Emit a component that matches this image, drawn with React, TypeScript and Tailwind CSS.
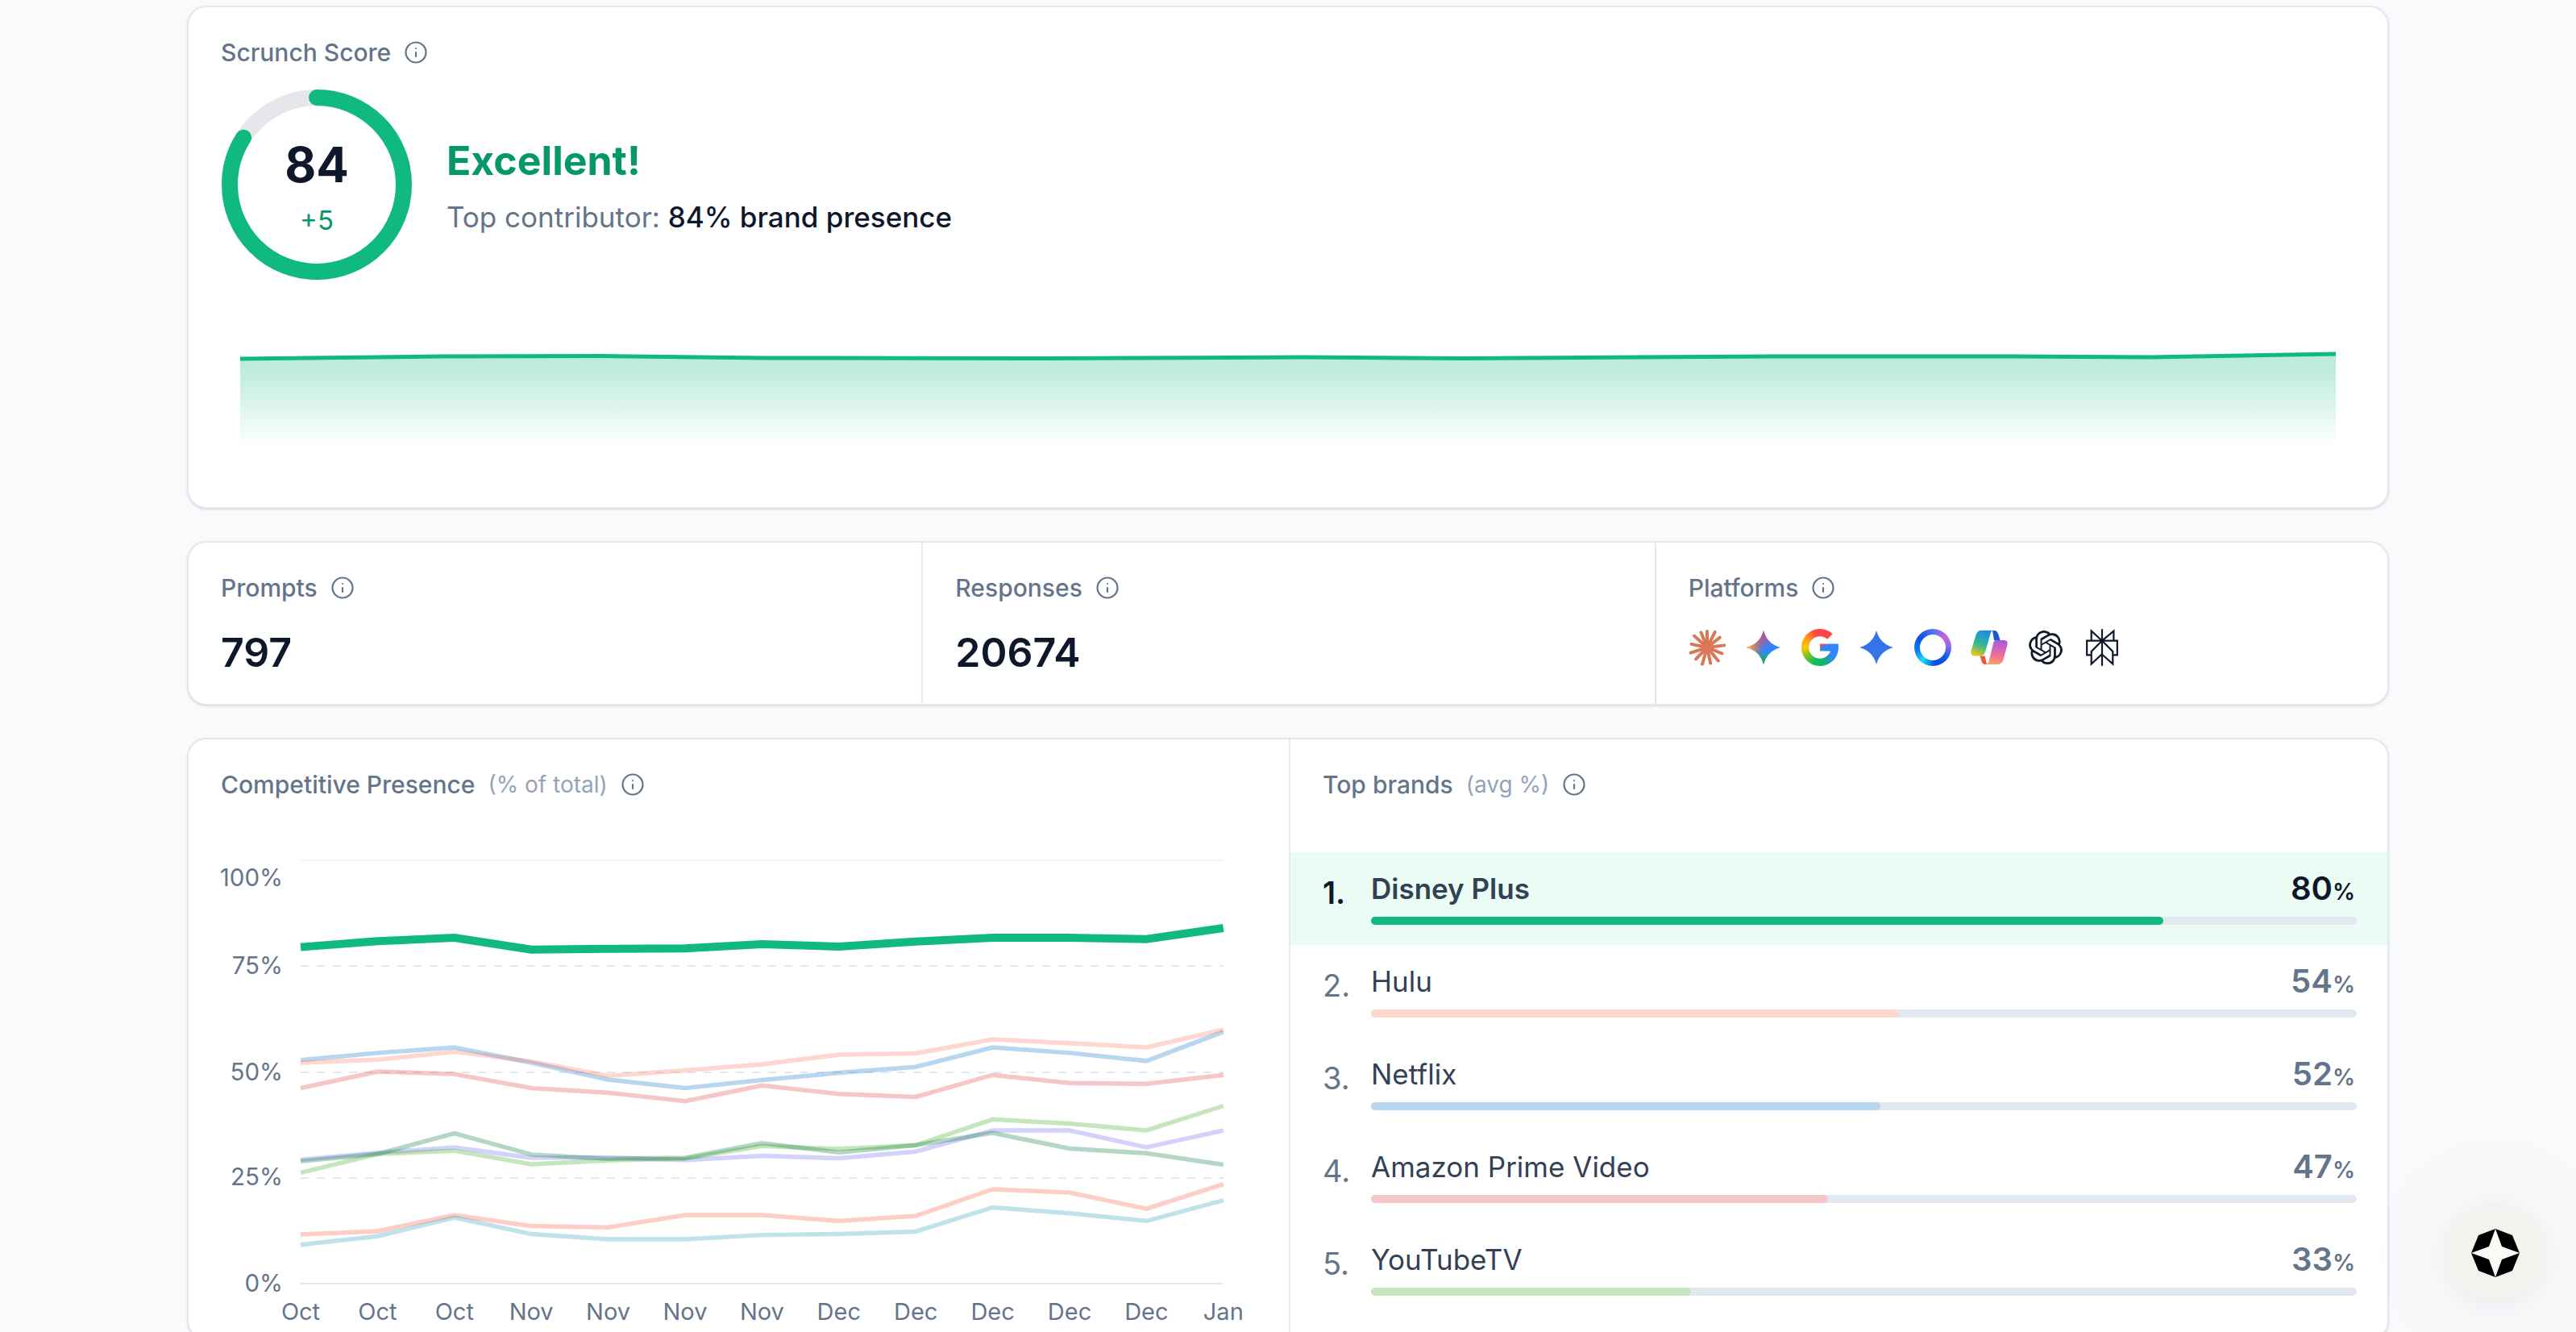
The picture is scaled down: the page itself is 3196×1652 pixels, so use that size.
import { Info } from "lucide-react";
import { SiOpenai, SiPerplexity } from "react-icons/si";

const months = ["Oct", "Oct", "Oct", "Nov", "Nov", "Nov", "Nov", "Dec", "Dec", "Dec", "Dec", "Dec", "Jan"];

const series = [
    { color: "rgb(248,88,65)", values: [11.6, 12.4, 16.2, 13.6, 13.3, 16.2, 16.2, 14.8, 16, 22.3, 21.5, 17.7, 23.5] },
    { color: "rgb(45,158,185)", values: [9.2, 11.2, 15.6, 11.7, 10.5, 10.5, 11.5, 11.7, 12.3, 18, 16.6, 14.8, 19.7] },
    { color: "rgb(105,105,238)", values: [29.3, 30.9, 32.2, 29.7, 29.8, 29.2, 30.2, 29.6, 31.2, 36.2, 36.2, 32.2, 36.2] },
    { color: "rgb(62,172,35)", values: [26.2, 30.6, 31.4, 28.2, 29.1, 29.5, 32.5, 31.8, 32.7, 38.8, 37.8, 36.2, 42] },
    { color: "rgb(8,118,55)", values: [28.9, 30.6, 35.5, 30.5, 29.5, 29.7, 33.2, 31, 32.7, 35.6, 31.9, 30.8, 28.1] },
    { color: "rgb(225,65,72)", values: [46.2, 50.1, 49.5, 46.2, 45.1, 43.1, 46.8, 44.8, 44.1, 49.3, 47.4, 47.2, 49.3] },
    { color: "rgb(15,118,205)", values: [52.8, 54.5, 55.8, 52.2, 48.2, 46.2, 48.1, 49.8, 51.2, 55.8, 54.5, 52.6, 59.5] },
    { color: "rgb(252,122,95)", values: [52.2, 52.9, 54.8, 52.5, 49.1, 50.4, 51.8, 54.1, 54.4, 57.7, 56.8, 55.8, 60] },
];

const mainSeries = [79.5, 80.9, 81.7, 78.9, 79.1, 79.2, 80.2, 79.6, 80.8, 81.7, 81.7, 81.4, 84];

const brands = [
    { name: "Disney Plus", pct: 80, width: 80.4, bar: "bg-[#10b981]" },
    { name: "Hulu", pct: 54, width: 53.5, bar: "bg-[#ffd6cd]" },
    { name: "Netflix", pct: 52, width: 51.7, bar: "bg-[#b7d6f0]" },
    { name: "Amazon Prime Video", pct: 47, width: 46.4, bar: "bg-[#f6c6c8]" },
    { name: "YouTubeTV", pct: 33, width: 32.5, bar: "bg-[#c5e6bd]" },
];

const sparkPoints: [number, number][] = [
    [0, 25], [250, 22], [450, 21.5], [650, 24], [1000, 24.5], [1320, 23], [1520, 24.5], [1900, 22], [2200, 22], [2370, 23], [2600, 19],
];

const STAR_PATH = "M23 2Q27.5 18.5 44 23Q27.5 27.5 23 44Q18.5 27.5 2 23Q18.5 18.5 23 2Z";
const G_PATH =
    "M43.611,20.083H42V20H24v8h11.303c-1.649,4.657-6.08,8-11.303,8c-6.627,0-12-5.373-12-12c0-6.627,5.373-12,12-12c3.059,0,5.842,1.154,7.961,3.039l5.657-5.657C34.046,6.053,29.268,4,24,4C12.955,4,4,12.955,4,24c0,11.045,8.955,20,20,20c11.045,0,20-8.955,20-20C44,22.659,43.862,21.35,43.611,20.083z";

const plotX = (i: number) => 99 + i * 95.4;
const plotY = (v: number) => 552 - v * 5.25;
const toPoints = (values: number[]) => values.map((v, i) => `${plotX(i)},${plotY(v)}`).join(" ");

function Label({ text, note }: { text: string; note?: string }) {
    return (
        <div className="flex h-10 items-center text-[30px] font-medium text-[#64748b]">
            <span>{text}</span>
            {note && <span className="ml-4 text-[28px] font-normal text-[#94a3b8]">{note}</span>}
            <Info className="ml-4" size={30} strokeWidth={1.75} />
        </div>
    );
}

function ScoreRing() {
    const r = 108;
    const length = 2 * Math.PI * r;
    return (
        <div className="relative h-[240px] w-[240px] shrink-0">
            <svg width="240" height="240" viewBox="0 0 240 240" className="absolute inset-0">
                <circle cx="119" cy="120" r={r} fill="none" stroke="#e5e7eb" strokeWidth="20" />
                <circle
                    cx="119"
                    cy="120"
                    r={r}
                    fill="none"
                    stroke="#10b981"
                    strokeWidth="20"
                    strokeLinecap="round"
                    strokeDasharray={`${length * 0.84} ${length}`}
                    transform="rotate(-90 119 120)"
                />
            </svg>
            <div className="absolute inset-0 flex flex-col items-center pr-[2px] pt-[61px]">
                <span className="text-[60px] leading-[68px] font-bold text-[#0f172a]">84</span>
                <span className="mt-[15px] text-[33px] leading-[40px] text-[#059669]">+5</span>
            </div>
        </div>
    );
}

function Sparkline() {
    const line = sparkPoints.map(([x, y]) => `${x},${y}`).join(" ");
    return (
        <svg width="2600" height="134" viewBox="0 0 2600 134" className="block">
            <defs>
                <linearGradient id="sparkFill" x1="0" y1="0" x2="0" y2="1">
                    <stop offset="0.15" stopColor="#10b981" stopOpacity="0.28" />
                    <stop offset="1" stopColor="#10b981" stopOpacity="0" />
                </linearGradient>
            </defs>
            <polygon points={`${line} 2600,134 0,134`} fill="url(#sparkFill)" />
            <polyline points={line} fill="none" stroke="#10b981" strokeWidth="5" />
        </svg>
    );
}

function ClaudeLogo() {
    const rays = [0, 27, 52, 83, 112, 140, 168, 196, 224, 252, 282, 312, 338];
    return (
        <svg width="46" height="46" viewBox="0 0 46 46">
            <circle cx="23" cy="23" r="7.500" fill="#d97757" />
            {rays.map((a, i) => (
                <line
                    key={a}
                    x1="23"
                    y1="23"
                    x2="23"
                    y2={i % 2 ? 1.500 : 3}
                    stroke="#d97757"
                    strokeWidth="4"
                    strokeLinecap="round"
                    transform={`rotate(${a} 23 23)`}
                />
            ))}
        </svg>
    );
}

function GeminiLogo() {
    return (
        <svg width="46" height="46" viewBox="0 0 46 46">
            <defs>
                <linearGradient id="gemLeft" x1="0" y1="0" x2="1" y2="0">
                    <stop offset="0.05" stopColor="#fbc012" />
                    <stop offset="0.5" stopColor="#c9736a" stopOpacity="0" />
                </linearGradient>
                <linearGradient id="gemTop" x1="0.3" y1="0" x2="0.6" y2="0.55">
                    <stop offset="0.1" stopColor="#e8475a" />
                    <stop offset="1" stopColor="#e8475a" stopOpacity="0" />
                </linearGradient>
                <linearGradient id="gemBottom" x1="0.5" y1="0.6" x2="0.5" y2="1">
                    <stop offset="0" stopColor="#1fa855" stopOpacity="0" />
                    <stop offset="0.8" stopColor="#1fa855" />
                </linearGradient>
            </defs>
            <path d={STAR_PATH} fill="#3186ff" />
            <path d={STAR_PATH} fill="url(#gemTop)" />
            <path d={STAR_PATH} fill="url(#gemLeft)" />
            <path d={STAR_PATH} fill="url(#gemBottom)" />
        </svg>
    );
}

function GoogleLogo() {
    return (
        <svg width="46" height="46" viewBox="4 4 40 40">
            <defs>
                <mask id="gMask">
                    <path d={G_PATH} fill="#fff" />
                </mask>
            </defs>
            <foreignObject x="4" y="4" width="40" height="40" mask="url(#gMask)">
                <div className="h-full w-full bg-[conic-gradient(#ff4545_0deg,#ff4545_48deg,#3186ff_72deg,#3186ff_125deg,#14b56a_165deg,#0ebc5f_200deg,#86c41e_240deg,#ffc800_270deg,#ff9a1f_305deg,#ff4545_345deg)]" />
            </foreignObject>
        </svg>
    );
}

function DeepStarLogo() {
    return (
        <svg width="46" height="46" viewBox="0 0 46 46">
            <path d={STAR_PATH} fill="#3574e8" />
        </svg>
    );
}

function MetaLogo() {
    return (
        <div className="flex h-[46px] w-[46px] items-center justify-center rounded-full bg-[conic-gradient(#4a74f0_0deg,#c95fe0_45deg,#8c6ae8_85deg,#1060e8_125deg,#0a46e0_170deg,#10e0f0_218deg,#1080f0_255deg,#1050e0_305deg,#4a74f0_360deg)]">
            <div className="h-[32px] w-[32px] rounded-full bg-white" />
        </div>
    );
}

function CopilotLogo() {
    return (
        <svg width="46" height="46" viewBox="0 0 46 46">
            <defs>
                <linearGradient id="copA" x1="0.6" y1="0" x2="0.25" y2="1">
                    <stop offset="0" stopColor="#1a8de8" />
                    <stop offset="0.55" stopColor="#35b98c" />
                    <stop offset="1" stopColor="#f0c619" />
                </linearGradient>
                <linearGradient id="copB" x1="0.6" y1="0" x2="0.5" y2="1">
                    <stop offset="0" stopColor="#a45be0" />
                    <stop offset="0.6" stopColor="#ec6aa0" />
                    <stop offset="1" stopColor="#fba25e" />
                </linearGradient>
            </defs>
            <path d="M27 2H29C32 2 33.500 4 34.500 7L36.500 14H29L27 2Z" fill="#1b5ad0" />
            <path d="M13 2H28C26 2 25 4 24.500 6L18 29C17 32 14.500 33.500 12 33.500H4.500C1.500 33.500 -0.500 31 0.500 27L6.500 7.500C7.500 4 10 2 13 2Z" fill="url(#copA)" />
            <path d="M11.500 33.500H17.500L20 44H18C15 44 14 42 13.500 40L11.500 33.500Z" fill="#f0583a" />
            <path d="M31 14H41.500C44.500 14 46.500 16 45.500 19.500L40.500 38C39.500 42 36.500 44 33 44H17.500C20.500 44 22 42 23 39L28 18C28.500 16 29.500 14 31 14Z" fill="url(#copB)" />
        </svg>
    );
}

function PlatformIcons() {
    return (
        <div className="flex items-center gap-6">
            <ClaudeLogo />
            <GeminiLogo />
            <GoogleLogo />
            <DeepStarLogo />
            <MetaLogo />
            <CopilotLogo />
            <SiOpenai size={42} className="mx-[2px] text-[#0f172a]" />
            <SiPerplexity size={46} className="text-[#0f172a]" />
        </div>
    );
}

function CompetitiveChart() {
    return (
        <svg width="1285" height="620" viewBox="0 0 1285 620" className="block font-['Inter',sans-serif]">
            <line x1="99" x2="1244" y1="27" y2="27" stroke="#e2e8f0" strokeWidth="1" />
            {[158, 290, 421].map((y) => (
                <line key={y} x1="99" x2="1244" y1={y} y2={y} stroke="#e2e8f0" strokeWidth="2" strokeDasharray="10 10" />
            ))}
            <line x1="99" x2="1244" y1="552" y2="552" stroke="#e2e8f0" strokeWidth="2" />
            {[
                { t: "100%", y: 49 },
                { t: "75%", y: 158 },
                { t: "50%", y: 290 },
                { t: "25%", y: 420 },
                { t: "0%", y: 552 },
            ].map((l) => (
                <text key={l.t} x="77" y={l.y} dy="10" textAnchor="end" fontSize="29.500" fill="#64748b">
                    {l.t}
                </text>
            ))}
            {series.map((s) => (
                <polyline key={s.color} points={toPoints(s.values)} fill="none" stroke={s.color} strokeOpacity="0.3" strokeWidth="5.500" />
            ))}
            <polyline points={toPoints(mainSeries)} fill="none" stroke="#10b981" strokeWidth="10" />
            {months.map((m, i) => (
                <text key={i} x={plotX(i)} y="597" textAnchor="middle" fontSize="29" fill="#64748b">
                    {m}
                </text>
            ))}
        </svg>
    );
}

function BrandRow({ rank, name, pct, width, bar }: { rank: number; name: string; pct: number; width: number; bar: string }) {
    const top = rank === 1;
    return (
        <div className={`flex h-[115px] pr-[38px] pl-10 pt-[21px] ${top ? "bg-[#eafcf4]" : ""}`}>
            <div className={`w-[60px] shrink-0 pt-[5px] text-[38px] leading-[48px] ${top ? "font-semibold text-[#0f172a]" : "text-[#64748b]"}`}>{rank}.</div>
            <div className="flex-1">
                <div className="flex h-12 items-center justify-between">
                    <span className={`text-[35px] text-[#334155] ${top ? "font-semibold" : ""}`}>{name}</span>
                    <span className={`pr-[2px] font-semibold ${top ? "text-[#0f172a]" : "text-[#64748b]"}`}>
                        <span className="text-[40px]">{pct}</span>
                        <span className="text-[28px]">%</span>
                    </span>
                </div>
                <div className="mt-[11px] h-[10px] rounded-full bg-[#e2e8f0]">
                    <div className={`h-full rounded-full ${bar}`} style={{ width: `${width}%` }} />
                </div>
            </div>
        </div>
    );
}

export default function App() {
    return (
        <div className="relative h-[1652px] overflow-hidden bg-[#f8fafc] pt-[7px] font-['Inter',sans-serif]">
            <div className="mx-auto flex w-[2732px] flex-col gap-10">
                <section className="rounded-3xl border-2 border-[#e2e8f0] bg-white px-10 pt-9 pb-[75px] shadow-sm">
                    <Label text="Scrunch Score" />
                    <div className="mt-6 flex items-center gap-10">
                        <ScoreRing />
                        <div className="pt-[4px]">
                            <div className="text-[50px] leading-[56px] font-bold text-[#059669]">Excellent!</div>
                            <div className="mt-[20px] text-[35px] leading-[44px] text-[#64748b]">
                                Top contributor: <span className="font-medium text-[#0f172a]">84% brand presence</span>
                            </div>
                        </div>
                    </div>
                    <div className="mt-[71px] px-6">
                        <Sparkline />
                    </div>
                </section>

                <section className="grid h-[204px] grid-cols-3 rounded-3xl border-2 border-[#e2e8f0] bg-white shadow-sm">
                    <div className="px-10 pt-9">
                        <Label text="Prompts" />
                        <div className="mt-[30px] text-[50px] leading-[60px] font-semibold text-[#0f172a]">797</div>
                    </div>
                    <div className="border-l-2 border-[#e2e8f0] px-10 pt-9">
                        <Label text="Responses" />
                        <div className="mt-[30px] text-[50px] leading-[60px] font-semibold text-[#0f172a]">20674</div>
                    </div>
                    <div className="border-l-2 border-[#e2e8f0] px-10 pt-9">
                        <Label text="Platforms" />
                        <div className="mt-[31px]">
                            <PlatformIcons />
                        </div>
                    </div>
                </section>

                <section className="grid grid-cols-[1365px_1fr] rounded-3xl border-2 border-[#e2e8f0] bg-white shadow-sm">
                    <div className="px-10 pt-9">
                        <Label text="Competitive Presence" note="(% of total)" />
                        <div className="mt-[47px]">
                            <CompetitiveChart />
                        </div>
                    </div>
                    <div className="border-l-2 border-[#e2e8f0] pt-9">
                        <div className="px-10">
                            <Label text="Top brands" note="(avg %)" />
                        </div>
                        <div className="mt-16">
                            {brands.map((b, i) => (
                                <BrandRow key={b.name} rank={i + 1} {...b} />
                            ))}
                        </div>
                    </div>
                </section>
            </div>

            <button className="absolute right-10 bottom-[38px] flex h-[120px] w-[120px] items-center justify-center rounded-full bg-[#f3f2ee] shadow-[0_4px_40px_rgba(15,23,42,0.07),0_0_220px_rgba(15,23,42,0.06)]">
                <svg width="60" height="60" viewBox="0 0 60 60">
                    <polygon points="30,0 51,8 60,30 51,52 30,60 9,52 0,30 9,8" fill="#000" />
                    <path d="M30 0L38 22L60 30L38 38L30 60L22 38L0 30L22 22Z" fill="#fafaf7" />
                </svg>
            </button>
        </div>
    );
}
